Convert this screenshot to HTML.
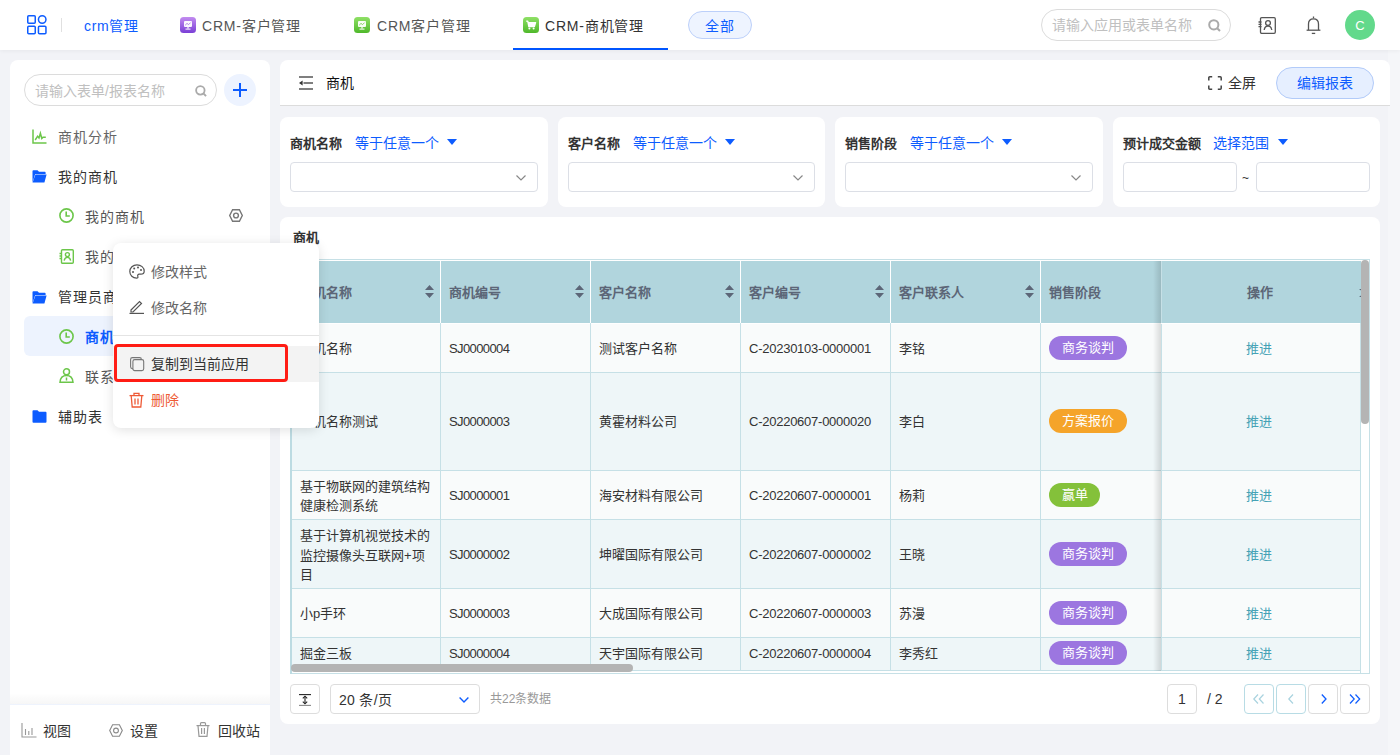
<!DOCTYPE html>
<html lang="zh-CN"><head><meta charset="utf-8">
<style>
*{box-sizing:border-box;margin:0;padding:0}
html,body{width:1400px;height:755px;overflow:hidden}
body{background:#f2f3f7;font-family:"Liberation Sans",sans-serif;font-size:14px;color:#333;position:relative}
.a{position:absolute}
.t{position:absolute;white-space:nowrap;line-height:1}
svg{position:absolute;overflow:visible}
#hdr{position:absolute;left:0;top:0;width:1400px;height:50px;background:#fff;box-shadow:0 1px 4px rgba(0,0,0,0.05)}
.tab{font-size:14px;letter-spacing:0.8px;color:#555}
#side{position:absolute;left:10px;top:60px;width:260px;height:700px;background:#fff;border-radius:8px}
.si{font-size:14px;letter-spacing:0.9px;color:#333}
.card{position:absolute;background:#fff}
.fl{font-size:13px;font-weight:bold;color:#333}
.fb{font-size:14px;color:#0d5cff}
.sel{position:absolute;height:30px;border:1px solid #dcdfe6;border-radius:4px;background:#fff}
.th{font-size:13px;font-weight:bold;color:#5c6677}
.td{font-size:13px;color:#333}
.lat{letter-spacing:-0.25px}
.badge{position:absolute;height:24px;border-radius:12px;color:#fff;font-size:13px;line-height:24px;text-align:center;white-space:nowrap}
.op{font-size:13px;color:#45a2b5}
.pbtn{position:absolute;top:684px;width:30px;height:30px;border:1px solid #ddd;border-radius:4px;background:#fff}
</style></head><body>

<!-- ============ HEADER ============ -->
<div class="a" style="left:1388px;top:50px;width:12px;height:705px;background:#f5f6f9"></div>
<div id="hdr"></div>
<svg style="left:27px;top:15px" width="20" height="20" viewBox="0 0 20 20" fill="none" stroke="#0d5cff" stroke-width="1.5">
  <rect x="0.75" y="0.75" width="7.5" height="7.5" rx="1"/>
  <circle cx="15.2" cy="4.5" r="3.75"/>
  <rect x="0.75" y="11.25" width="7.5" height="7.5" rx="1"/>
  <rect x="11.45" y="11.25" width="7.5" height="7.5" rx="1"/>
</svg>
<div class="a" style="left:61px;top:18px;width:1px;height:14px;background:#e0e0e0"></div>
<div class="t" style="left:84px;top:19px;font-size:14px;letter-spacing:0.7px;color:#0d5cff">crm管理</div>

<!-- tab1 -->
<svg style="left:180px;top:17px" width="16" height="16" viewBox="0 0 16 16">
  <defs><linearGradient id="gp" x1="0" y1="0" x2="0" y2="1"><stop offset="0" stop-color="#c28cf0"/><stop offset="1" stop-color="#7a3fd6"/></linearGradient>
  <linearGradient id="gg" x1="0" y1="0" x2="0" y2="1"><stop offset="0" stop-color="#8fe066"/><stop offset="1" stop-color="#4fb82a"/></linearGradient></defs>
  <rect width="16" height="16" rx="3.5" fill="url(#gp)"/>
  <rect x="4" y="4" width="8" height="6" rx="1" fill="#fff" opacity="0.95"/>
  <path d="M5.2 8.2 L7 6.4 L8.6 7.6 L10.6 5.6" stroke="#a070e0" stroke-width="0.8" fill="none"/>
  <rect x="7.4" y="10" width="1.2" height="1.6" fill="#fff"/>
  <rect x="5.5" y="11.6" width="5" height="1" fill="#fff"/>
</svg>
<div class="t tab" style="left:202px;top:19px">CRM-客户管理</div>
<!-- tab2 -->
<svg style="left:354px;top:17px" width="16" height="16" viewBox="0 0 16 16">
  <rect width="16" height="16" rx="3.5" fill="url(#gg)"/>
  <rect x="4" y="4" width="8" height="6" rx="1" fill="#fff" opacity="0.95"/>
  <path d="M5.2 8.2 L7 6.4 L8.6 7.6 L10.6 5.6" stroke="#6cc840" stroke-width="0.8" fill="none"/>
  <rect x="7.4" y="10" width="1.2" height="1.6" fill="#fff"/>
  <rect x="5.5" y="11.6" width="5" height="1" fill="#fff"/>
</svg>
<div class="t tab" style="left:377px;top:19px">CRM客户管理</div>
<!-- tab3 -->
<svg style="left:523px;top:17px" width="16" height="16" viewBox="0 0 16 16">
  <rect width="16" height="16" rx="3.5" fill="url(#gg)"/>
  <path d="M3.2 4.2 L4.8 4.2 L5.8 9.6 L11.4 9.6 L12.6 5.6 L5.2 5.6" stroke="#fff" stroke-width="1.3" fill="#fff" stroke-linejoin="round"/>
  <circle cx="6.4" cy="11.6" r="1" fill="#fff"/><circle cx="10.6" cy="11.6" r="1" fill="#fff"/>
</svg>
<div class="t tab" style="left:545px;top:19px;color:#333">CRM-商机管理</div>
<div class="a" style="left:513px;top:48px;width:155px;height:2px;background:#0055ff"></div>
<!-- all -->
<div class="a" style="left:688px;top:11px;width:64px;height:28px;border-radius:14px;background:#eef4ff;border:1px solid #bcd0fa"></div>
<div class="t" style="left:705px;top:19px;font-size:14px;letter-spacing:1px;color:#0d5cff">全部</div>

<!-- search -->
<div class="a" style="left:1041px;top:9px;width:190px;height:32px;border-radius:16px;border:1px solid #dcdcdc;background:#fff"></div>
<div class="t" style="left:1052px;top:18px;font-size:14px;color:#c0c0c0">请输入应用或表单名称</div>
<svg style="left:1208px;top:19px" width="13" height="13" viewBox="0 0 13 13" fill="none" stroke="#aaa" stroke-width="2">
  <circle cx="5.8" cy="5.8" r="4.6"/><path d="M9.2 9.2 L12 12"/>
</svg>
<!-- contacts -->
<svg style="left:1258px;top:17px" width="18" height="17" viewBox="0 0 18 17" fill="none" stroke="#555" stroke-width="1.3">
  <rect x="2.5" y="0.7" width="14.8" height="15.6" rx="1.2"/>
  <path d="M0.5 5 H3.5 M0.5 7.3 H3.5 M0.5 9.6 H3.5"/>
  <circle cx="10" cy="6" r="2.4"/>
  <path d="M6.2 13 Q6.8 9 10 9 Q13.2 9 13.8 13"/>
</svg>
<!-- bell -->
<svg style="left:1306px;top:16px" width="15" height="19" viewBox="0 0 15 19" fill="none" stroke="#555" stroke-width="1.3">
  <path d="M7.5 0.5 V2.2"/>
  <path d="M2.5 14 V8 Q2.5 2.8 7.5 2.8 Q12.5 2.8 12.5 8 V14"/>
  <path d="M0.6 14.2 H14.4"/>
  <path d="M5.8 17.4 H9.2"/>
</svg>
<!-- avatar -->
<div class="a" style="left:1345px;top:10px;width:30px;height:30px;border-radius:15px;background:#62d98b"></div>
<div class="t" style="left:1355px;top:19px;width:10px;text-align:center;font-size:13px;color:#fff">C</div>

<!-- ============ SIDEBAR ============ -->
<div id="side"></div>
<div class="a" style="left:24px;top:74px;width:193px;height:32px;border-radius:16px;border:1px solid #dcdcdc"></div>
<div class="t" style="left:35px;top:84px;font-size:14px;color:#c0c0c0">请输入表单/报表名称</div>
<svg style="left:195px;top:85px" width="12" height="12" viewBox="0 0 13 13" fill="none" stroke="#aaa" stroke-width="2">
  <circle cx="5.8" cy="5.8" r="4.6"/><path d="M9.2 9.2 L12 12"/>
</svg>
<div class="a" style="left:224px;top:74px;width:32px;height:32px;border-radius:16px;background:#edf3ff"></div>
<svg style="left:233px;top:83px" width="14" height="14" viewBox="0 0 14 14" stroke="#0d5cff" stroke-width="2"><path d="M7 0 V14 M0 7 H14"/></svg>

<!-- items -->
<svg style="left:32px;top:129px" width="15" height="15" viewBox="0 0 15 15" fill="none" stroke="#6cc64a" stroke-width="1.5">
  <path d="M1 0.5 V14 H14.5"/>
  <path d="M3.2 11 L5.6 7.2 L7 9 L8.4 4.2 L9.8 9.5 L11 8.2 H13.8"/>
</svg>
<div class="t si" style="left:58px;top:130px;color:#666">商机分析</div>

<svg style="left:32px;top:170px" width="15" height="13" viewBox="0 0 15 13">
  <path d="M0.5 1.2 Q0.5 0.3 1.4 0.3 H5.5 L7 1.8 H12.8 Q13.6 1.8 13.6 2.6 V4 H3.2 L0.5 12.5 Z" fill="#0d5cff"/>
  <path d="M3.4 4.6 H14.6 L12.4 12.6 H0.6 Z" fill="#0d5cff"/>
</svg>
<div class="t si" style="left:58px;top:170px">我的商机</div>

<svg style="left:59px;top:208px" width="15" height="15" viewBox="0 0 15 15" fill="none" stroke="#6cc64a" stroke-width="1.6">
  <circle cx="7.5" cy="7.5" r="6.6"/><path d="M7.2 3.6 V8 H10.8"/>
</svg>
<div class="t si" style="left:85px;top:210px;color:#555">我的商机</div>
<svg style="left:229px;top:209px" width="14" height="13" viewBox="0 0 14 13" fill="none" stroke="#777" stroke-width="1.4">
  <path d="M3.6 0.8 H10.4 L13.3 6.5 L10.4 12.2 H3.6 L0.7 6.5 Z"/><circle cx="7" cy="6.5" r="2.4"/>
</svg>

<svg style="left:59px;top:249px" width="15" height="15" viewBox="0 0 15 15" fill="none" stroke="#6cc64a" stroke-width="1.4">
  <rect x="2.5" y="0.7" width="11.8" height="13.6" rx="1"/>
  <path d="M0.5 4.5 H3 M0.5 7 H3 M0.5 9.5 H3"/>
  <circle cx="8.4" cy="5.6" r="2"/>
  <path d="M5.2 11.6 Q5.6 8.4 8.4 8.4 Q11.2 8.4 11.6 11.6"/>
</svg>
<div class="t si" style="left:85px;top:250px;color:#555">我的商机报表</div>

<svg style="left:32px;top:291px" width="15" height="13" viewBox="0 0 15 13">
  <path d="M0.5 1.2 Q0.5 0.3 1.4 0.3 H5.5 L7 1.8 H12.8 Q13.6 1.8 13.6 2.6 V4 H3.2 L0.5 12.5 Z" fill="#0d5cff"/>
  <path d="M3.4 4.6 H14.6 L12.4 12.6 H0.6 Z" fill="#0d5cff"/>
</svg>
<div class="t si" style="left:58px;top:290px">管理员商机</div>

<div class="a" style="left:24px;top:316px;width:232px;height:40px;border-radius:6px;background:#edf3fe"></div>
<svg style="left:59px;top:329px" width="15" height="15" viewBox="0 0 15 15" fill="none" stroke="#6cc64a" stroke-width="1.6">
  <circle cx="7.5" cy="7.5" r="6.6"/><path d="M7.2 3.6 V8 H10.8"/>
</svg>
<div class="t si" style="left:85px;top:330px;color:#0d5cff;font-weight:bold">商机</div>

<svg style="left:59px;top:368px" width="15" height="15" viewBox="0 0 15 15" fill="none" stroke="#6cc64a" stroke-width="1.5">
  <circle cx="7.5" cy="3.8" r="3"/>
  <path d="M1 14.2 Q1.6 7.6 7.5 7.6 Q13.4 7.6 14 14.2 Z"/>
  <path d="M7.5 9.5 V12.5"/>
</svg>
<div class="t si" style="left:85px;top:370px;color:#555">联系人</div>

<svg style="left:32px;top:410px" width="15" height="13" viewBox="0 0 15 13">
  <path d="M0.5 1.2 Q0.5 0.3 1.4 0.3 H5.5 L7 1.8 H13.6 Q14.5 1.8 14.5 2.7 V11.8 Q14.5 12.7 13.6 12.7 H1.4 Q0.5 12.7 0.5 11.8 Z" fill="#0d5cff"/>
</svg>
<div class="t si" style="left:58px;top:410px">辅助表</div>

<!-- bottom bar -->
<div class="a" style="left:10px;top:693px;width:260px;height:11px;background:linear-gradient(to bottom,rgba(0,0,0,0),rgba(0,0,0,0.035))"></div>
<div class="a" style="left:10px;top:704px;width:260px;height:1px;background:#eef3fd"></div>
<div class="a" style="left:10px;top:705px;width:260px;height:50px;background:#fff"></div>
<svg style="left:21px;top:723px" width="16" height="15" viewBox="0 0 16 15" fill="none" stroke="#999" stroke-width="1.1">
  <path d="M1 0 V14 H15.5"/><path d="M4.5 6 V12 M7.8 8 V12 M11 5 V12"/>
</svg>
<div class="t" style="left:43px;top:724px;font-size:14px;color:#333">视图</div>
<svg style="left:109px;top:724px" width="14" height="13" viewBox="0 0 14 13" fill="none" stroke="#888" stroke-width="1.1">
  <path d="M3.6 0.8 H10.4 L13.3 6.5 L10.4 12.2 H3.6 L0.7 6.5 Z"/><circle cx="7" cy="6.5" r="2.4"/>
</svg>
<div class="t" style="left:130px;top:724px;font-size:14px;color:#333">设置</div>
<svg style="left:196px;top:722px" width="14" height="15" viewBox="0 0 14 15" fill="none" stroke="#999" stroke-width="1.2">
  <path d="M0.5 3.6 H13.5"/><path d="M4.5 3.4 V1.6 Q4.5 0.6 5.5 0.6 H8.5 Q9.5 0.6 9.5 1.6 V3.4"/>
  <path d="M2 3.8 L3 14.3 H11 L12 3.8"/><path d="M5.6 6 V12 M8.4 6 V12"/>
</svg>
<div class="t" style="left:218px;top:724px;font-size:14px;color:#333">回收站</div>

<!-- ============ MAIN TITLE ============ -->
<div class="card" style="left:280px;top:60px;width:1110px;height:46px;border-radius:8px 8px 0 0;border-bottom:1px solid #dcdcdc"></div>
<svg style="left:299px;top:76px" width="15" height="14" viewBox="0 0 15 14" fill="none" stroke="#555" stroke-width="1.5">
  <path d="M0 1 H14 M4.5 7 H14 M0 13 H14"/><path d="M0 7 L3.6 4.4 V9.6 Z" fill="#333" stroke="none"/>
</svg>
<div class="t" style="left:326px;top:76px;font-size:14px;color:#111">商机</div>
<svg style="left:1208px;top:76px" width="14" height="14" viewBox="0 0 14 14" fill="none" stroke="#444" stroke-width="1.5">
  <path d="M0.8 4.5 V1.8 Q0.8 0.8 1.8 0.8 H4.2 M9.8 0.8 H12.2 Q13.2 0.8 13.2 1.8 V4.5 M13.2 9.5 V12.2 Q13.2 13.2 12.2 13.2 H9.8 M4.2 13.2 H1.8 Q0.8 13.2 0.8 12.2 V9.5"/>
</svg>
<div class="t" style="left:1228px;top:76px;font-size:14px;color:#333">全屏</div>
<div class="a" style="left:1276px;top:67px;width:98px;height:32px;border-radius:16px;background:#e6efff;border:1px solid #b2cbf9"></div>
<div class="t" style="left:1297px;top:76px;font-size:14px;color:#0d5cff">编辑报表</div>

<!-- ============ FILTERS ============ -->
<div class="card" style="left:280px;top:117px;width:268px;height:90px;border-radius:8px"></div>
<div class="card" style="left:558px;top:117px;width:267px;height:90px;border-radius:8px"></div>
<div class="card" style="left:835px;top:117px;width:268px;height:90px;border-radius:8px"></div>
<div class="card" style="left:1113px;top:117px;width:267px;height:90px;border-radius:8px"></div>

<div class="t fl" style="left:290px;top:137px">商机名称</div>
<div class="t fb" style="left:355px;top:136px">等于任意一个</div>
<svg style="left:447px;top:139px" width="10" height="6" viewBox="0 0 10 6"><path d="M0 0 H10 L5 6 Z" fill="#0d5cff"/></svg>
<div class="sel" style="left:290px;top:162px;width:248px"></div>
<svg style="left:516px;top:175px" width="10" height="6" viewBox="0 0 10 6" fill="none" stroke="#888" stroke-width="1.2"><path d="M0.5 0.5 L5 5 L9.5 0.5"/></svg>

<div class="t fl" style="left:568px;top:137px">客户名称</div>
<div class="t fb" style="left:633px;top:136px">等于任意一个</div>
<svg style="left:725px;top:139px" width="10" height="6" viewBox="0 0 10 6"><path d="M0 0 H10 L5 6 Z" fill="#0d5cff"/></svg>
<div class="sel" style="left:568px;top:162px;width:247px"></div>
<svg style="left:793px;top:175px" width="10" height="6" viewBox="0 0 10 6" fill="none" stroke="#888" stroke-width="1.2"><path d="M0.5 0.5 L5 5 L9.5 0.5"/></svg>

<div class="t fl" style="left:845px;top:137px">销售阶段</div>
<div class="t fb" style="left:910px;top:136px">等于任意一个</div>
<svg style="left:1002px;top:139px" width="10" height="6" viewBox="0 0 10 6"><path d="M0 0 H10 L5 6 Z" fill="#0d5cff"/></svg>
<div class="sel" style="left:845px;top:162px;width:248px"></div>
<svg style="left:1071px;top:175px" width="10" height="6" viewBox="0 0 10 6" fill="none" stroke="#888" stroke-width="1.2"><path d="M0.5 0.5 L5 5 L9.5 0.5"/></svg>

<div class="t fl" style="left:1123px;top:137px">预计成交金额</div>
<div class="t fb" style="left:1213px;top:136px">选择范围</div>
<svg style="left:1278px;top:139px" width="10" height="6" viewBox="0 0 10 6"><path d="M0 0 H10 L5 6 Z" fill="#0d5cff"/></svg>
<div class="sel" style="left:1123px;top:162px;width:114px"></div>
<div class="t" style="left:1242px;top:172px;font-size:12px;color:#333">~</div>
<div class="sel" style="left:1256px;top:162px;width:114px"></div>

<!-- ============ TABLE CARD ============ -->
<div class="card" style="left:280px;top:217px;width:1100px;height:507px;border-radius:8px"></div>
<div class="t" style="left:293px;top:231px;font-size:13px;font-weight:bold;color:#333">商机</div>

<!--TABLE-->
<div class="a" style="left:290px;top:259px;width:1080px;height:415px;border:1px solid #c6e0e6;background:#fff"></div>
<div class="a" style="left:291px;top:261px;width:1070px;height:62px;background:#b1d5dd"></div>
<div class="a" style="left:440px;top:261px;width:1px;height:62px;background:#fff"></div>
<div class="a" style="left:590px;top:261px;width:1px;height:62px;background:#fff"></div>
<div class="a" style="left:740px;top:261px;width:1px;height:62px;background:#fff"></div>
<div class="a" style="left:890px;top:261px;width:1px;height:62px;background:#fff"></div>
<div class="a" style="left:1040px;top:261px;width:1px;height:62px;background:#fff"></div>
<div class="t th" style="left:300px;top:286px">商机名称</div>
<div class="t th" style="left:449px;top:286px">商机编号</div>
<div class="t th" style="left:599px;top:286px">客户名称</div>
<div class="t th" style="left:749px;top:286px">客户编号</div>
<div class="t th" style="left:899px;top:286px">客户联系人</div>
<div class="t th" style="left:1049px;top:286px">销售阶段</div>
<svg style="left:425px;top:285px" width="9" height="13" viewBox="0 0 9 13"><path d="M4.5 0 L9 5 H0 Z M4.5 13 L9 8 H0 Z" fill="#5c6677"/></svg>
<svg style="left:575px;top:285px" width="9" height="13" viewBox="0 0 9 13"><path d="M4.5 0 L9 5 H0 Z M4.5 13 L9 8 H0 Z" fill="#5c6677"/></svg>
<svg style="left:725px;top:285px" width="9" height="13" viewBox="0 0 9 13"><path d="M4.5 0 L9 5 H0 Z M4.5 13 L9 8 H0 Z" fill="#5c6677"/></svg>
<svg style="left:875px;top:285px" width="9" height="13" viewBox="0 0 9 13"><path d="M4.5 0 L9 5 H0 Z M4.5 13 L9 8 H0 Z" fill="#5c6677"/></svg>
<svg style="left:1025px;top:285px" width="9" height="13" viewBox="0 0 9 13"><path d="M4.5 0 L9 5 H0 Z M4.5 13 L9 8 H0 Z" fill="#5c6677"/></svg>
<div class="a" style="left:291px;top:324px;width:1070px;height:49px;background:#f9fbfb"></div>
<div class="a" style="left:291px;top:372px;width:1070px;height:1px;background:#c6e0e6"></div>
<div class="a" style="left:440px;top:323px;width:1px;height:50px;background:#c6e0e6"></div>
<div class="a" style="left:590px;top:323px;width:1px;height:50px;background:#c6e0e6"></div>
<div class="a" style="left:740px;top:323px;width:1px;height:50px;background:#c6e0e6"></div>
<div class="a" style="left:890px;top:323px;width:1px;height:50px;background:#c6e0e6"></div>
<div class="a" style="left:1040px;top:323px;width:1px;height:50px;background:#c6e0e6"></div>
<div class="t td" style="left:300px;top:342px">商机名称</div>
<div class="t td" style="left:449px;top:342px;letter-spacing:-0.6px">SJ0000004</div>
<div class="t td" style="left:599px;top:342px">测试客户名称</div>
<div class="t td lat" style="left:749px;top:342px">C-20230103-0000001</div>
<div class="t td" style="left:899px;top:342px">李铭</div>
<div class="badge" style="left:1049px;top:336px;width:78px;background:#9c76e0">商务谈判</div>
<div class="a" style="left:291px;top:373px;width:1070px;height:98px;background:#eef6f8"></div>
<div class="a" style="left:291px;top:470px;width:1070px;height:1px;background:#c6e0e6"></div>
<div class="a" style="left:440px;top:372px;width:1px;height:99px;background:#c6e0e6"></div>
<div class="a" style="left:590px;top:372px;width:1px;height:99px;background:#c6e0e6"></div>
<div class="a" style="left:740px;top:372px;width:1px;height:99px;background:#c6e0e6"></div>
<div class="a" style="left:890px;top:372px;width:1px;height:99px;background:#c6e0e6"></div>
<div class="a" style="left:1040px;top:372px;width:1px;height:99px;background:#c6e0e6"></div>
<div class="t td" style="left:300px;top:415px">商机名称测试</div>
<div class="t td" style="left:449px;top:415px;letter-spacing:-0.6px">SJ0000003</div>
<div class="t td" style="left:599px;top:415px">黄霍材料公司</div>
<div class="t td lat" style="left:749px;top:415px">C-20220607-0000020</div>
<div class="t td" style="left:899px;top:415px">李白</div>
<div class="badge" style="left:1049px;top:409px;width:78px;background:#f5a42a">方案报价</div>
<div class="a" style="left:291px;top:471px;width:1070px;height:49px;background:#f9fbfb"></div>
<div class="a" style="left:291px;top:519px;width:1070px;height:1px;background:#c6e0e6"></div>
<div class="a" style="left:440px;top:470px;width:1px;height:50px;background:#c6e0e6"></div>
<div class="a" style="left:590px;top:470px;width:1px;height:50px;background:#c6e0e6"></div>
<div class="a" style="left:740px;top:470px;width:1px;height:50px;background:#c6e0e6"></div>
<div class="a" style="left:890px;top:470px;width:1px;height:50px;background:#c6e0e6"></div>
<div class="a" style="left:1040px;top:470px;width:1px;height:50px;background:#c6e0e6"></div>
<div class="t td" style="left:300px;top:480px">基于物联网的建筑结构</div>
<div class="t td" style="left:300px;top:499px">健康检测系统</div>
<div class="t td" style="left:449px;top:488.5px;letter-spacing:-0.6px">SJ0000001</div>
<div class="t td" style="left:599px;top:488.5px">海安材料有限公司</div>
<div class="t td lat" style="left:749px;top:488.5px">C-20220607-0000001</div>
<div class="t td" style="left:899px;top:488.5px">杨莉</div>
<div class="badge" style="left:1049px;top:482.5px;width:51px;background:#84c13a">赢单</div>
<div class="a" style="left:291px;top:520px;width:1070px;height:69px;background:#eef6f8"></div>
<div class="a" style="left:291px;top:588px;width:1070px;height:1px;background:#c6e0e6"></div>
<div class="a" style="left:440px;top:519px;width:1px;height:70px;background:#c6e0e6"></div>
<div class="a" style="left:590px;top:519px;width:1px;height:70px;background:#c6e0e6"></div>
<div class="a" style="left:740px;top:519px;width:1px;height:70px;background:#c6e0e6"></div>
<div class="a" style="left:890px;top:519px;width:1px;height:70px;background:#c6e0e6"></div>
<div class="a" style="left:1040px;top:519px;width:1px;height:70px;background:#c6e0e6"></div>
<div class="t td" style="left:300px;top:529.0px">基于计算机视觉技术的</div>
<div class="t td" style="left:300px;top:548.5px">监控摄像头互联网+项</div>
<div class="t td" style="left:300px;top:568.0px">目</div>
<div class="t td" style="left:449px;top:547.5px;letter-spacing:-0.6px">SJ0000002</div>
<div class="t td" style="left:599px;top:547.5px">坤曜国际有限公司</div>
<div class="t td lat" style="left:749px;top:547.5px">C-20220607-0000002</div>
<div class="t td" style="left:899px;top:547.5px">王晓</div>
<div class="badge" style="left:1049px;top:541.5px;width:78px;background:#9c76e0">商务谈判</div>
<div class="a" style="left:291px;top:589px;width:1070px;height:49px;background:#f9fbfb"></div>
<div class="a" style="left:291px;top:637px;width:1070px;height:1px;background:#c6e0e6"></div>
<div class="a" style="left:440px;top:588px;width:1px;height:50px;background:#c6e0e6"></div>
<div class="a" style="left:590px;top:588px;width:1px;height:50px;background:#c6e0e6"></div>
<div class="a" style="left:740px;top:588px;width:1px;height:50px;background:#c6e0e6"></div>
<div class="a" style="left:890px;top:588px;width:1px;height:50px;background:#c6e0e6"></div>
<div class="a" style="left:1040px;top:588px;width:1px;height:50px;background:#c6e0e6"></div>
<div class="t td" style="left:300px;top:606.5px">小p手环</div>
<div class="t td" style="left:449px;top:606.5px;letter-spacing:-0.6px">SJ0000003</div>
<div class="t td" style="left:599px;top:606.5px">大成国际有限公司</div>
<div class="t td lat" style="left:749px;top:606.5px">C-20220607-0000003</div>
<div class="t td" style="left:899px;top:606.5px">苏漫</div>
<div class="badge" style="left:1049px;top:600.5px;width:78px;background:#9c76e0">商务谈判</div>
<div class="a" style="left:291px;top:638px;width:1070px;height:33px;background:#eef6f8"></div>
<div class="a" style="left:291px;top:670px;width:1070px;height:1px;background:#c6e0e6"></div>
<div class="a" style="left:440px;top:637px;width:1px;height:34px;background:#c6e0e6"></div>
<div class="a" style="left:590px;top:637px;width:1px;height:34px;background:#c6e0e6"></div>
<div class="a" style="left:740px;top:637px;width:1px;height:34px;background:#c6e0e6"></div>
<div class="a" style="left:890px;top:637px;width:1px;height:34px;background:#c6e0e6"></div>
<div class="a" style="left:1040px;top:637px;width:1px;height:34px;background:#c6e0e6"></div>
<div class="t td" style="left:300px;top:647px">掘金三板</div>
<div class="t td" style="left:449px;top:647px;letter-spacing:-0.6px">SJ0000004</div>
<div class="t td" style="left:599px;top:647px">天宇国际有限公司</div>
<div class="t td lat" style="left:749px;top:647px">C-20220607-0000004</div>
<div class="t td" style="left:899px;top:647px">李秀红</div>
<div class="badge" style="left:1049px;top:641px;width:78px;background:#9c76e0">商务谈判</div>
<div class="a" style="left:291px;top:671px;width:1070px;height:2px;background:#fff"></div>
<div class="a" style="left:1153px;top:261px;width:8px;height:410px;background:linear-gradient(to right,rgba(0,0,0,0),rgba(0,0,0,0.13))"></div>
<div class="a" style="left:1161px;top:261px;width:200px;height:62px;background:#b1d5dd"></div>
<div class="t th" style="left:1247px;top:286px">操作</div>
<div class="a" style="left:1161px;top:324px;width:200px;height:49px;background:#f9fbfb;border-left:1px solid #c6e0e6"></div>
<div class="a" style="left:1161px;top:372px;width:200px;height:1px;background:#c6e0e6"></div>
<div class="t op" style="left:1246px;top:342px">推进</div>
<div class="a" style="left:1161px;top:373px;width:200px;height:98px;background:#eef6f8;border-left:1px solid #c6e0e6"></div>
<div class="a" style="left:1161px;top:470px;width:200px;height:1px;background:#c6e0e6"></div>
<div class="t op" style="left:1246px;top:415px">推进</div>
<div class="a" style="left:1161px;top:471px;width:200px;height:49px;background:#f9fbfb;border-left:1px solid #c6e0e6"></div>
<div class="a" style="left:1161px;top:519px;width:200px;height:1px;background:#c6e0e6"></div>
<div class="t op" style="left:1246px;top:488.5px">推进</div>
<div class="a" style="left:1161px;top:520px;width:200px;height:69px;background:#eef6f8;border-left:1px solid #c6e0e6"></div>
<div class="a" style="left:1161px;top:588px;width:200px;height:1px;background:#c6e0e6"></div>
<div class="t op" style="left:1246px;top:547.5px">推进</div>
<div class="a" style="left:1161px;top:589px;width:200px;height:49px;background:#f9fbfb;border-left:1px solid #c6e0e6"></div>
<div class="a" style="left:1161px;top:637px;width:200px;height:1px;background:#c6e0e6"></div>
<div class="t op" style="left:1246px;top:606.5px">推进</div>
<div class="a" style="left:1161px;top:638px;width:200px;height:33px;background:#eef6f8;border-left:1px solid #c6e0e6"></div>
<div class="a" style="left:1161px;top:670px;width:200px;height:1px;background:#c6e0e6"></div>
<div class="t op" style="left:1246px;top:647px">推进</div>
<div class="a" style="left:1161px;top:261px;width:1px;height:62px;background:#c6e0e6"></div>
<svg style="left:1359px;top:289px" width="4" height="8" viewBox="0 0 4 8"><path d="M0 0 H4 V3 Z M0 8 H4 V5 Z" fill="#5c6677"/></svg>
<div class="a" style="left:1361px;top:260px;width:8px;height:413px;background:#fff"></div>
<div class="a" style="left:1360px;top:323px;width:1px;height:350px;background:#c6e0e6"></div>
<div class="a" style="left:1361px;top:260px;width:8px;height:164px;border-radius:4px;background:#b4b4b4"></div>
<div class="a" style="left:290px;top:259px;width:2px;height:415px;background:#bcdbe2"></div>
<div class="a" style="left:291px;top:664px;width:342px;height:8px;border-radius:4px;background:#b4b4b4"></div>
<!--/TABLE-->

<!-- ============ PAGINATION ============ -->
<div class="a" style="left:290px;top:684px;width:30px;height:30px;border:1px solid #ddd;border-radius:4px;background:#fff"></div>
<svg style="left:299px;top:694px" width="12" height="12" viewBox="0 0 12 12" fill="none" stroke="#222" stroke-width="1.1">
  <path d="M0 0.6 H12"/><path d="M0 11.4 H12" stroke="#888"/><path d="M6 2.4 V9.6"/><path d="M3.8 4.4 L6 2.2 L8.2 4.4 M3.8 7.6 L6 9.8 L8.2 7.6"/>
</svg>
<div class="a" style="left:330px;top:684px;width:150px;height:30px;border:1px solid #ddd;border-radius:4px;background:#fff"></div>
<div class="t" style="left:339px;top:693px;font-size:14px;letter-spacing:0.3px;color:#333">20 条/页</div>
<svg style="left:459px;top:697px" width="10" height="6" viewBox="0 0 10 6" fill="none" stroke="#0d5cff" stroke-width="1.4"><path d="M0.6 0.6 L5 5 L9.4 0.6"/></svg>
<div class="t" style="left:490px;top:693px;font-size:12px;color:#999">共22条数据</div>

<div class="a" style="left:1167px;top:684px;width:30px;height:30px;border:1px solid #ddd;border-radius:4px;background:#fff"></div>
<div class="t" style="left:1167px;top:692px;width:30px;text-align:center;font-size:14px;color:#333">1</div>
<div class="t" style="left:1207px;top:692px;font-size:14px;color:#333">/ 2</div>
<div class="pbtn" style="left:1244px;border-color:#b8dce5"></div>
<div class="pbtn" style="left:1276px;border-color:#b8dce5"></div>
<div class="pbtn" style="left:1308px"></div>
<div class="pbtn" style="left:1340px"></div>
<svg style="left:1253px;top:694px" width="12" height="10" viewBox="0 0 12 10" fill="none" stroke="#a9d3df" stroke-width="1.2"><path d="M5 0.5 L0.8 5 L5 9.5 M10.5 0.5 L6.3 5 L10.5 9.5"/></svg>
<svg style="left:1288px;top:694px" width="6" height="10" viewBox="0 0 6 10" fill="none" stroke="#a9d3df" stroke-width="1.2"><path d="M5 0.5 L0.8 5 L5 9.5"/></svg>
<svg style="left:1321px;top:694px" width="6" height="10" viewBox="0 0 6 10" fill="none" stroke="#0d5cff" stroke-width="1.3"><path d="M0.8 0.5 L5 5 L0.8 9.5"/></svg>
<svg style="left:1349px;top:694px" width="12" height="10" viewBox="0 0 12 10" fill="none" stroke="#0d5cff" stroke-width="1.2"><path d="M1 0.5 L5.2 5 L1 9.5 M6.5 0.5 L10.7 5 L6.5 9.5"/></svg>

<!-- ============ CONTEXT MENU ============ -->
<div class="a" style="left:113px;top:243px;width:206px;height:185px;background:#fff;border-radius:8px;box-shadow:0 2px 12px rgba(0,0,0,0.12)"></div>
<svg style="left:129px;top:264px" width="16" height="15" viewBox="0 0 16 15" fill="none" stroke="#555" stroke-width="1.2">
  <path d="M8 0.8 C4 0.8 0.8 3.8 0.8 7.5 C0.8 11.2 3.8 14.2 7.6 14.2 C8.8 14.2 9.2 13.4 8.8 12.4 C8.3 11.2 9 10.2 10.2 10.2 H11.8 C13.8 10.2 15.2 9 15.2 7.2 C15.2 3.6 12 0.8 8 0.8 Z"/>
  <circle cx="4" cy="8" r="1" fill="#555" stroke="none"/><circle cx="5.2" cy="4.4" r="1" fill="#555" stroke="none"/><circle cx="9" cy="3.6" r="1" fill="#555" stroke="none"/><circle cx="12" cy="6" r="1" fill="#555" stroke="none"/>
</svg>
<div class="t" style="left:151px;top:265px;font-size:14px;color:#666">修改样式</div>
<svg style="left:129px;top:299px" width="16" height="15" viewBox="0 0 16 15" fill="none" stroke="#555" stroke-width="1.2">
  <path d="M2 11 L10.5 2.5 L12.5 4.5 L4 13 H2 Z"/><path d="M0.5 14.4 H15"/>
</svg>
<div class="t" style="left:151px;top:301px;font-size:14px;color:#666">修改名称</div>
<div class="a" style="left:113px;top:335px;width:206px;height:1px;background:#e4e4e4"></div>
<div class="a" style="left:113px;top:346px;width:206px;height:36px;background:#f3f3f3"></div>
<div class="a" style="left:114px;top:344px;width:174px;height:38px;border:3px solid #ff1c14;border-radius:4px"></div>
<svg style="left:130px;top:357px" width="15" height="15" viewBox="0 0 15 15" fill="none" stroke="#777" stroke-width="1.1">
  <rect x="0.6" y="0.6" width="10.8" height="11" rx="1.8"/><rect x="2.9" y="2.6" width="10.8" height="11" rx="1.8" fill="#f3f3f3"/>
</svg>
<div class="t" style="left:151px;top:357px;font-size:14px;color:#333">复制到当前应用</div>
<svg style="left:129px;top:392px" width="15" height="16" viewBox="0 0 15 16" fill="none" stroke="#ee5a36" stroke-width="1.3">
  <path d="M0.5 3.6 H14.5"/><path d="M5 3.4 V1.4 H10 V3.4"/><path d="M2.2 3.8 L3.2 15 H11.8 L12.8 3.8"/><path d="M6 6.5 V12.5 M9 6.5 V12.5"/>
</svg>
<div class="t" style="left:151px;top:393px;font-size:14px;color:#ee5a36">删除</div>

</body></html>
